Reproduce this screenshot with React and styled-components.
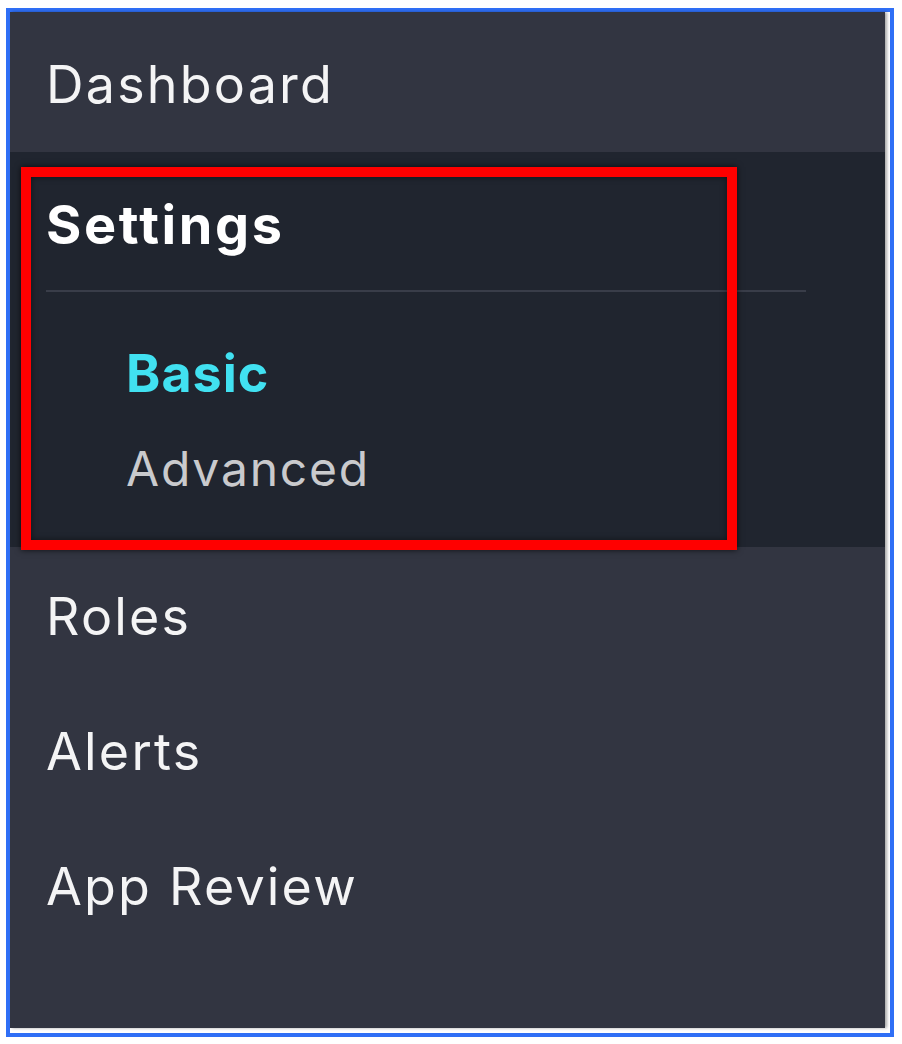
import React from 'react';
import styled, { createGlobalStyle } from 'styled-components';

const GlobalStyle = createGlobalStyle`
  html, body {
    margin: 0;
    padding: 0;
    background: #ffffff;
  }
  body {
    font-family: Inter, "Noto Sans", "Liberation Sans", sans-serif;
    -webkit-font-smoothing: antialiased;
  }
`;

const Frame = styled.div`
  margin: 8px 0 0 6px;
  width: 880px;
  height: 1021px;
  border: 4px solid #2f6ff6;
  background: #ffffff;
  box-sizing: content-box;
`;

const Sidebar = styled.nav`
  width: 875px;
  height: 1016px;
  background: #323541;
  box-shadow: 2px 0 3px rgba(0, 0, 0, 0.35);
  display: flex;
  flex-direction: column;
`;

const Item = styled.div`
  padding: ${({ $top }) => $top}px 36px ${({ $bottom }) => $bottom}px;
  font-size: 52px;
  line-height: 63px;
  letter-spacing: 2.2px;
  color: #f4f4f5;
  font-weight: 400;
`;

const Group = styled.div`
  position: relative;
  background: #20252f;
  padding: 41px 36px 47px;
`;

const GroupTitle = styled.div`
  font-size: 54px;
  line-height: 63px;
  font-weight: 700;
  letter-spacing: 2.6px;
  color: #ffffff;
`;

const Divider = styled.div`
  width: 760px;
  height: 2px;
  margin: 34px 0 50px;
  background: #393d49;
`;

const SubItem = styled.div`
  padding-left: 80px;
  margin-bottom: ${({ $gap }) => $gap || 0}px;
  font-size: ${({ $active }) => ($active ? '52px' : '48px')};
  line-height: 63px;
  letter-spacing: ${({ $active }) => ($active ? '1px' : '1.8px')};
  font-weight: ${({ $active }) => ($active ? 700 : 400)};
  color: ${({ $active }) => ($active ? '#41e1f1' : '#c9cacd')};
`;

const Highlight = styled.div`
  position: absolute;
  top: 15px;
  left: 11px;
  width: 696px;
  height: 363px;
  border: 10px solid #ff0000;
  box-shadow: 0 0 6px rgba(0, 0, 0, 0.7), inset 0 0 6px rgba(0, 0, 0, 0.5);
  pointer-events: none;
`;

const App = () => {
  return (
    <>
      <GlobalStyle />
      <Frame>
        <Sidebar>
          <Item $top={41} $bottom={36}>Dashboard</Item>
          <Group>
            <GroupTitle>Settings</GroupTitle>
            <Divider />
            <SubItem $active $gap={32}>Basic</SubItem>
            <SubItem>Advanced</SubItem>
            <Highlight />
          </Group>
          <Item $top={38} $bottom={34}>Roles</Item>
          <Item $top={38} $bottom={34}>Alerts</Item>
          <Item $top={38} $bottom={34}>App Review</Item>
        </Sidebar>
      </Frame>
    </>
  );
};

export default App;
